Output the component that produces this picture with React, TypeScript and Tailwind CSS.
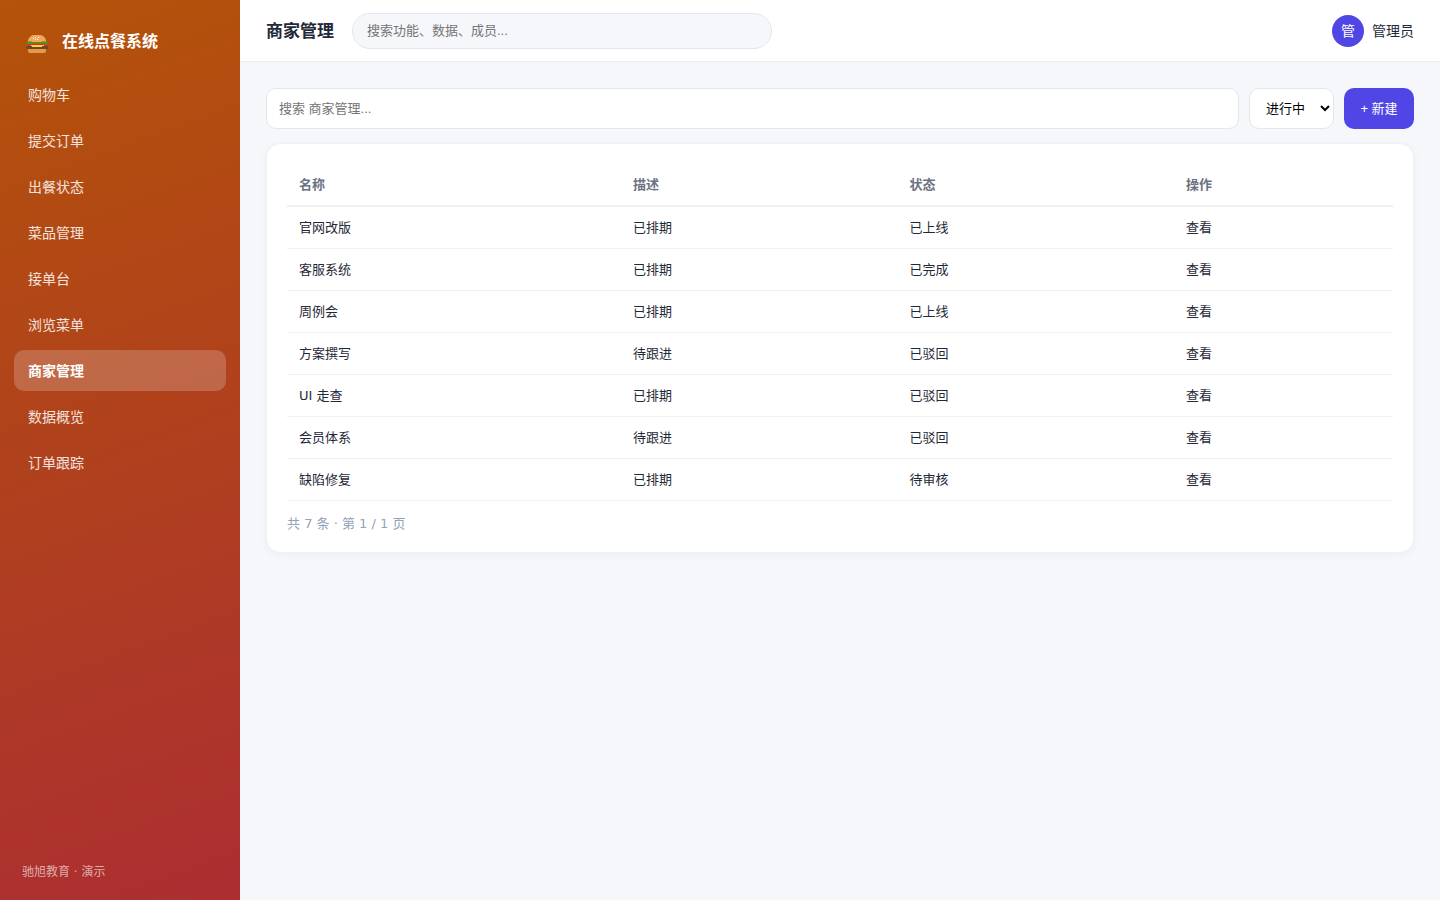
const menu = ['购物车', '提交订单', '出餐状态', '菜品管理', '接单台', '浏览菜单', '商家管理', '数据概览', '订单跟踪'];

const rows = [
  ['官网改版', '已排期', '已上线'],
  ['客服系统', '已排期', '已完成'],
  ['周例会', '已排期', '已上线'],
  ['方案撰写', '待跟进', '已驳回'],
  ['UI 走查', '已排期', '已驳回'],
  ['会员体系', '待跟进', '已驳回'],
  ['缺陷修复', '已排期', '待审核'],
];

function Burger() {
  return (
    <svg viewBox="0 0 22 18" className="h-[18px] w-[22px]" aria-hidden="true">
      <path d="M2 7V5l1-2 2-2 2-1h8l2 1 2 2 1 2v2z" fill="#f0a860" />
      <path d="M2 14h18v2q0 2-2 2H4q-2 0-2-2z" fill="#e39b45" />
      <path d="M3 8h16v3H3z" fill="#e0302c" />
      <path d="M5 10h13v1h-2v1H6v-1H5z" fill="#fdd835" />
      <path d="M1 11h5v1h10v-1h6v3H1v-1H0v-1h1z" fill="#6d4534" />
      <path d="M2 7l2-1 3 1h8l3-1 2 1h2v1l-2 1h-3l-2-1-3 1-3-1-3 1H1L0 8l1-1z" fill="#4b9a16" />
      <path d="M7 3h1v1H7zM9 2h1v1H9zM12 2h1v1h-1zM9 4h1v1H9zM11 4h1v1h-1z" fill="#fff3dc" />
    </svg>
  );
}

export default function App() {
  return (
    <div className="flex min-h-screen bg-[#f5f7fb] font-['DejaVu_Sans','Noto_Sans_CJK_SC',sans-serif] text-sm text-[#1f2937]">
      <aside className="flex w-60 shrink-0 flex-col bg-[linear-gradient(160deg,#b45309,#ac2e32)] px-3.5 pt-6 pb-[19px] text-white">
        <div className="flex h-9 items-center gap-3.5 px-3 text-base font-bold">
          <span className="mt-1"><Burger /></span>
          <span>在线点餐系统</span>
        </div>
        <nav className="mt-3.5 flex flex-col gap-[5px]">
          {menu.map((name) => (
            <a
              key={name}
              href="#"
              aria-current={name === '商家管理' ? 'page' : undefined}
              className={
                name === '商家管理'
                  ? 'flex h-[41px] items-center rounded-[10px] bg-white/20 px-3.5 font-bold'
                  : 'flex h-[41px] items-center rounded-[10px] px-3.5 text-white/85'
              }
            >
              {name}
            </a>
          ))}
        </nav>
        <div className="mt-auto px-2 text-xs leading-[18px] text-white/60">驰旭教育 · 演示</div>
      </aside>
      <div className="flex min-w-0 flex-1 flex-col">
        <header className="flex h-[62px] items-center border-b border-[#eceef3] bg-white px-[26px]">
          <h1 className="text-[17px] leading-6 font-bold">商家管理</h1>
          <input
            type="search"
            aria-label="全局搜索"
            placeholder="搜索功能、数据、成员..."
            className="ml-[18px] h-9 w-[420px] rounded-full border border-[#e3e6ee] bg-[#f5f7fb] px-3.5 font-['Liberation_Sans','Noto_Sans_CJK_SC',sans-serif] text-[13px] placeholder:text-[#757575]"
          />
          <div className="ml-auto flex items-center gap-2">
            <span className="flex size-8 items-center justify-center rounded-full bg-[#4f46e5] text-white">管</span>
            <span>管理员</span>
          </div>
        </header>
        <main className="flex flex-col gap-3.5 p-[26px]">
          <div className="flex h-[41px] gap-2.5 font-['Liberation_Sans','Noto_Sans_CJK_SC',sans-serif] text-[13px]">
            <input
              type="search"
              aria-label="搜索商家管理"
              placeholder="搜索 商家管理..."
              className="min-w-0 flex-1 rounded-[10px] border border-[#e3e6ee] bg-white px-3 pt-0.5 placeholder:text-[#757575]"
            />
            <select aria-label="状态筛选" className="w-[85px] rounded-[10px] border border-[#e3e6ee] bg-white pl-3 text-black">
              <option>进行中</option>
              <option>已完成</option>
            </select>
            <button type="button" className="w-[70px] rounded-[10px] bg-[#4f46e5] pt-0.5 text-white">+ 新建</button>
          </div>
          <section className="rounded-[14px] border border-[#eef0f4] bg-white px-5 pt-5 pb-[18px] shadow-[0_2px_8px_rgba(31,41,55,0.04)]">
            <table className="w-full table-fixed text-left text-[13px]">
              <colgroup>
                <col className="w-[30.2%]" />
                <col className="w-1/4" />
                <col className="w-1/4" />
                <col />
              </colgroup>
              <thead>
                <tr className="h-[42px] border-b-2 border-[#eef0f4] text-[#6b7280]">
                  {['名称', '描述', '状态', '操作'].map((h) => (
                    <th key={h} className="px-3 pt-0.5 font-bold">{h}</th>
                  ))}
                </tr>
              </thead>
              <tbody>
                {rows.map((row) => (
                  <tr key={row[0]} className="h-[42px] border-b border-[#eef0f4]">
                    {row.map((cell, i) => (
                      <td key={i} className="px-3 pt-0.5">{cell}</td>
                    ))}
                    <td className="px-3 pt-0.5"><a href="#">查看</a></td>
                  </tr>
                ))}
              </tbody>
            </table>
            <p className="mt-[13px] text-[13px] leading-5 text-[#94a3b8]">共 7 条 · 第 1 / 1 页</p>
          </section>
        </main>
      </div>
    </div>
  );
}
